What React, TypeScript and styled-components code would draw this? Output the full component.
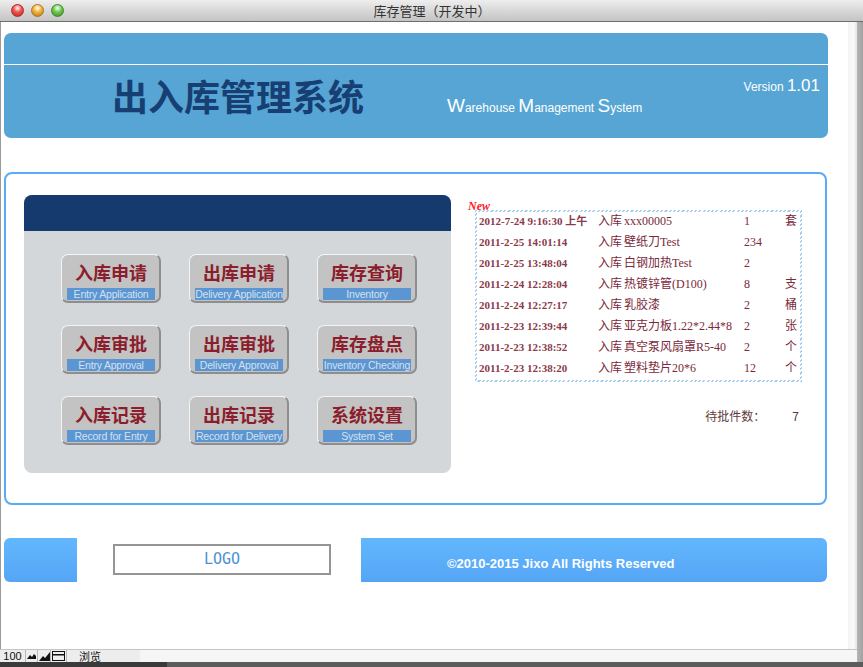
import React from "react"
import styled, { createGlobalStyle } from "styled-components"

const GlobalStyle = createGlobalStyle`
    html, body {
        margin: 0;
        padding: 0;
        background: #ffffff;
        overflow: hidden;
    }
    * {
        box-sizing: border-box;
    }
`

const CJK = `"Noto Sans CJK SC", sans-serif`

const Window = styled.div`
    width: 863px;
    height: 667px;
    display: flex;
    flex-direction: column;
    background: #ffffff;
`

const TitleBar = styled.div`
    height: 22px;
    flex: none;
    display: grid;
    grid-template-columns: 1fr auto 1fr;
    align-items: center;
    padding: 0 10px 0 11px;
    background: linear-gradient(#eeeeee, #d6d6d6 55%, #c4c4c4);
    border-bottom: 1px solid #6e6e6e;
`

const Lights = styled.div`
    display: flex;
    gap: 7px;
`

const Light = styled.span<{ $c: string; $d: string }>`
    width: 13px;
    height: 13px;
    border-radius: 50%;
    border: 1px solid ${(p) => p.$d};
    background: radial-gradient(circle at 50% 28%, #ffffff 0, ${(p) => p.$c} 42%, ${(p) => p.$d} 100%);
`

const WindowTitle = styled.div`
    font-family: ${CJK};
    font-size: 13px;
    color: #333333;
    line-height: 1;
`

const Frame = styled.div`
    flex: 1;
    display: flex;
    min-height: 0;
`

const Pane = styled.div`
    flex: 1;
    display: flex;
    flex-direction: column;
`

const PaneRow = styled.div`
    flex: 1;
    display: flex;
    min-height: 0;
`

const Content = styled.div`
    width: 848px;
    display: flex;
    flex-direction: column;
    align-items: flex-start;
    padding-left: 3px;
    border-left: 1px solid #9a9a9a;
    background: #ffffff;
`

const Gutter = styled.div`
    flex: 1;
    background: linear-gradient(to right, #f3f3f3, #fafafa 60%, #e4e4e4);
`

const EdgeBar = styled.div`
    width: 6px;
    background: linear-gradient(to right, #b4b4b4, #a2a2a2);
`

/* header */

const Header = styled.header`
    margin-top: 11px;
    width: 824px;
    height: 105px;
    border-radius: 7px;
    background: #56a5d4;
    display: flex;
    flex-direction: column;
`

const HeaderBand = styled.div`
    height: 32px;
    border-bottom: 1px solid #ffffff;
`

const HeaderMain = styled.div`
    flex: 1;
    display: grid;
    grid-template-columns: 335px 1fr auto;
    align-items: start;
    padding: 0 8px 0 108px;
`

const SystemTitle = styled.h1`
    margin: 12px 0 0;
    font-family: ${CJK};
    font-size: 36px;
    line-height: 36px;
    font-weight: 700;
    color: #173f73;
    white-space: nowrap;
`

const EnglishTitle = styled.div`
    margin-top: 32px;
    font-family: "Liberation Sans", Arial, sans-serif;
    font-size: 12px;
    line-height: 18px;
    color: #ffffff;
    white-space: nowrap;
`

const Initial = styled.span`
    font-size: 19px;
`

const Version = styled.div`
    margin-top: 12px;
    font-family: "Liberation Sans", Arial, sans-serif;
    font-size: 12px;
    line-height: 17px;
    color: #ffffff;
    white-space: nowrap;
`

const VersionNumber = styled.span`
    font-size: 17px;
`

/* main panel */

const MainPanel = styled.section`
    margin-top: 34px;
    width: 823px;
    height: 333px;
    border: 2px solid #5aabf5;
    border-radius: 8px;
    padding: 21px 0 0 18px;
    display: flex;
    gap: 24px;
`

const MenuPanel = styled.div`
    width: 427px;
    height: 278px;
    border-radius: 8px;
    background: #d4d7da;
    overflow: hidden;
    display: flex;
    flex-direction: column;
`

const MenuHeader = styled.div`
    height: 36px;
    background: #143a6e;
`

const MenuGrid = styled.div`
    display: grid;
    grid-template-columns: repeat(3, 100px);
    grid-auto-rows: 49px;
    column-gap: 28px;
    row-gap: 22px;
    padding: 23px 0 0 37px;
`

const MenuButton = styled.button`
    all: unset;
    display: flex;
    flex-direction: column;
    align-items: stretch;
    padding: 5px 4px 0 5px;
    border-radius: 7px;
    background: #c3c3c3;
    border-top: 1px solid #f4f4f4;
    border-left: 1px solid #f4f4f4;
    border-right: 2px solid #8e8e8e;
    border-bottom: 2px solid #8e8e8e;
    cursor: pointer;
`

const ButtonLabel = styled.span`
    font-family: ${CJK};
    font-size: 18px;
    line-height: 24px;
    font-weight: 700;
    color: #8b1d2c;
    text-align: center;
`

const ButtonBand = styled.span`
    margin-top: 4px;
    height: 12px;
    background: #5b96d3;
    font-family: "Liberation Sans", Arial, sans-serif;
    font-size: 10.5px;
    line-height: 12px;
    letter-spacing: -0.2px;
    color: #d3e0ef;
    text-align: center;
    white-space: nowrap;
    overflow: hidden;
`

/* pending list */

const ListColumn = styled.div`
    width: 327px;
    padding-top: 15px;
    display: flex;
    flex-direction: column;
`

const ListBox = styled.div`
    position: relative;
    height: 172px;
    padding: 2px;
    background: repeating-linear-gradient(135deg, #a6cff3 0 1.5px, #ffffff 1.5px 3px);
`

const ListInner = styled.div`
    height: 100%;
    background: #ffffff;
`

const NewTag = styled.span`
    position: absolute;
    top: -9px;
    left: -7px;
    font-family: "Liberation Serif", serif;
    font-size: 12px;
    font-style: italic;
    font-weight: 700;
    color: #ff2020;
    line-height: 11px;
`

const ListRow = styled.div`
    display: grid;
    grid-template-columns: 119px 26px 120px 41px 1fr;
    height: 21px;
    line-height: 19px;
    padding-left: 2px;
    color: #7a2a3a;
    font-family: "Liberation Serif", ${CJK};
    font-size: 12px;
    white-space: nowrap;
`

const DateCell = styled.span`
    font-family: "Liberation Serif", ${CJK};
    font-size: 11px;
    font-weight: 700;
    color: #8a3a4a;
    overflow: hidden;
`

const Cell = styled.span`
    overflow: hidden;
`

const PendingRow = styled.div`
    margin-top: 25px;
    display: flex;
    justify-content: flex-end;
    gap: 27px;
    padding-right: 3px;
    font-family: ${CJK};
    font-size: 12px;
    color: #5e3a3a;
`

/* footer */

const Footer = styled.footer`
    margin-top: 33px;
    display: flex;
    align-items: flex-start;
`

const FooterBlock = styled.div`
    height: 44px;
    background: linear-gradient(#62b7fc, #55a5f6);
`

const FooterLeft = styled(FooterBlock)`
    width: 73px;
    border-radius: 6px 0 0 6px;
`

const LogoBox = styled.div`
    margin: 6px 0 0 36px;
    width: 218px;
    height: 31px;
    border: 2px solid #959595;
    display: flex;
    align-items: center;
    justify-content: center;
    font-family: "DejaVu Sans Mono", monospace;
    font-size: 15px;
    color: #4a92d4;
    padding-bottom: 2px;
`

const FooterRight = styled(FooterBlock)`
    margin-left: 30px;
    width: 466px;
    border-radius: 0 6px 6px 0;
    display: flex;
    align-items: center;
    padding: 6px 0 0 86px;
    font-family: "Liberation Sans", Arial, sans-serif;
    font-size: 13px;
    font-weight: 700;
    color: #ffffff;
`

/* status bar */

const StatusBar = styled.div`
    height: 13px;
    flex: none;
    display: flex;
    align-items: center;
    border-top: 1px solid #c4c4c4;
    background: linear-gradient(to right, #ededed 0, #ededed 140px, #f6f6f6 140px);
    font-family: "Liberation Sans", ${CJK};
    font-size: 11px;
    color: #111111;
`

const StatusCell = styled.span<{ $w: number }>`
    width: ${(p) => p.$w}px;
    height: 12px;
    display: flex;
    align-items: center;
    justify-content: center;
    border-right: 1px solid #b8b8b8;
    line-height: 1;
`

const StatusMode = styled.span`
    margin-left: 12px;
    font-family: ${CJK};
    font-size: 11px;
    line-height: 1;
`

const BottomBar = styled.div`
    height: 5px;
    flex: none;
    background: linear-gradient(to right, #3a3a3a 0, #3a3a3a 167px, #5c5c5c 167px);
`

const menuItems = [
    ["入库申请", "Entry Application"],
    ["出库申请", "Delivery Application"],
    ["库存查询", "Inventory"],
    ["入库审批", "Entry Approval"],
    ["出库审批", "Delivery Approval"],
    ["库存盘点", "Inventory Checking"],
    ["入库记录", "Record for Entry"],
    ["出库记录", "Record for Delivery"],
    ["系统设置", "System Set"],
]

const pending = [
    ["2012-7-24 9:16:30 上午", "入库", "xxx00005", "1", "套"],
    ["2011-2-25 14:01:14", "入库", "壁纸刀Test", "234", ""],
    ["2011-2-25 13:48:04", "入库", "白钢加热Test", "2", ""],
    ["2011-2-24 12:28:04", "入库", "热镀锌管(D100)", "8", "支"],
    ["2011-2-24 12:27:17", "入库", "乳胶漆", "2", "桶"],
    ["2011-2-23 12:39:44", "入库", "亚克力板1.22*2.44*8", "2", "张"],
    ["2011-2-23 12:38:52", "入库", "真空泵风扇罩R5-40", "2", "个"],
    ["2011-2-23 12:38:20", "入库", "塑料垫片20*6", "12", "个"],
]

const App: React.FC = () => {
    return (
        <Window>
            <GlobalStyle />
            <TitleBar>
                <Lights>
                    <Light $c="#f2544d" $d="#b0282a" />
                    <Light $c="#f3b43a" $d="#b07418" />
                    <Light $c="#6fca4f" $d="#3a8a26" />
                </Lights>
                <WindowTitle>库存管理（开发中）</WindowTitle>
                <span />
            </TitleBar>
            <Frame>
                <Pane>
                    <PaneRow>
                        <Content>
                            <Header>
                                <HeaderBand />
                                <HeaderMain>
                                    <SystemTitle>出入库管理系统</SystemTitle>
                                    <EnglishTitle>
                                        <Initial>W</Initial>arehouse <Initial>M</Initial>anagement{" "}
                                        <Initial>S</Initial>ystem
                                    </EnglishTitle>
                                    <Version>
                                        Version <VersionNumber>1.01</VersionNumber>
                                    </Version>
                                </HeaderMain>
                            </Header>

                            <MainPanel>
                                <MenuPanel>
                                    <MenuHeader />
                                    <MenuGrid>
                                        {menuItems.map(([cn, en]) => (
                                            <MenuButton key={cn}>
                                                <ButtonLabel>{cn}</ButtonLabel>
                                                <ButtonBand>{en}</ButtonBand>
                                            </MenuButton>
                                        ))}
                                    </MenuGrid>
                                </MenuPanel>

                                <ListColumn>
                                    <ListBox>
                                        <NewTag>New</NewTag>
                                        <ListInner>
                                            {pending.map((r, i) => (
                                                <ListRow key={i}>
                                                    <DateCell>{r[0]}</DateCell>
                                                    <Cell>{r[1]}</Cell>
                                                    <Cell>{r[2]}</Cell>
                                                    <Cell>{r[3]}</Cell>
                                                    <Cell>{r[4]}</Cell>
                                                </ListRow>
                                            ))}
                                        </ListInner>
                                    </ListBox>
                                    <PendingRow>
                                        <span>待批件数：</span>
                                        <span>7</span>
                                    </PendingRow>
                                </ListColumn>
                            </MainPanel>

                            <Footer>
                                <FooterLeft />
                                <LogoBox>LOGO</LogoBox>
                                <FooterRight>©2010-2015 Jixo All Rights Reserved</FooterRight>
                            </Footer>
                        </Content>
                        <Gutter />
                    </PaneRow>
                    <StatusBar>
                        <StatusCell $w={26}>100</StatusCell>
                        <StatusCell $w={12}>
                            <svg width="9" height="6" viewBox="0 0 9 6">
                                <path d="M0 6 L3 2 L5 4 L7 1 L9 3 L9 6 Z" fill="#111" />
                            </svg>
                        </StatusCell>
                        <StatusCell $w={13}>
                            <svg width="11" height="9" viewBox="0 0 11 9">
                                <path d="M0 9 L4 4 L6 6 L11 0 L11 9 Z" fill="#111" />
                            </svg>
                        </StatusCell>
                        <StatusCell $w={16}>
                            <svg width="13" height="10" viewBox="0 0 13 10">
                                <rect x="0.5" y="0.5" width="12" height="9" fill="none" stroke="#111" />
                                <rect x="1" y="3" width="11" height="1.5" fill="#111" />
                            </svg>
                        </StatusCell>
                        <StatusMode>浏览</StatusMode>
                    </StatusBar>
                </Pane>
                <EdgeBar />
            </Frame>
            <BottomBar />
        </Window>
    )
}

export default App
